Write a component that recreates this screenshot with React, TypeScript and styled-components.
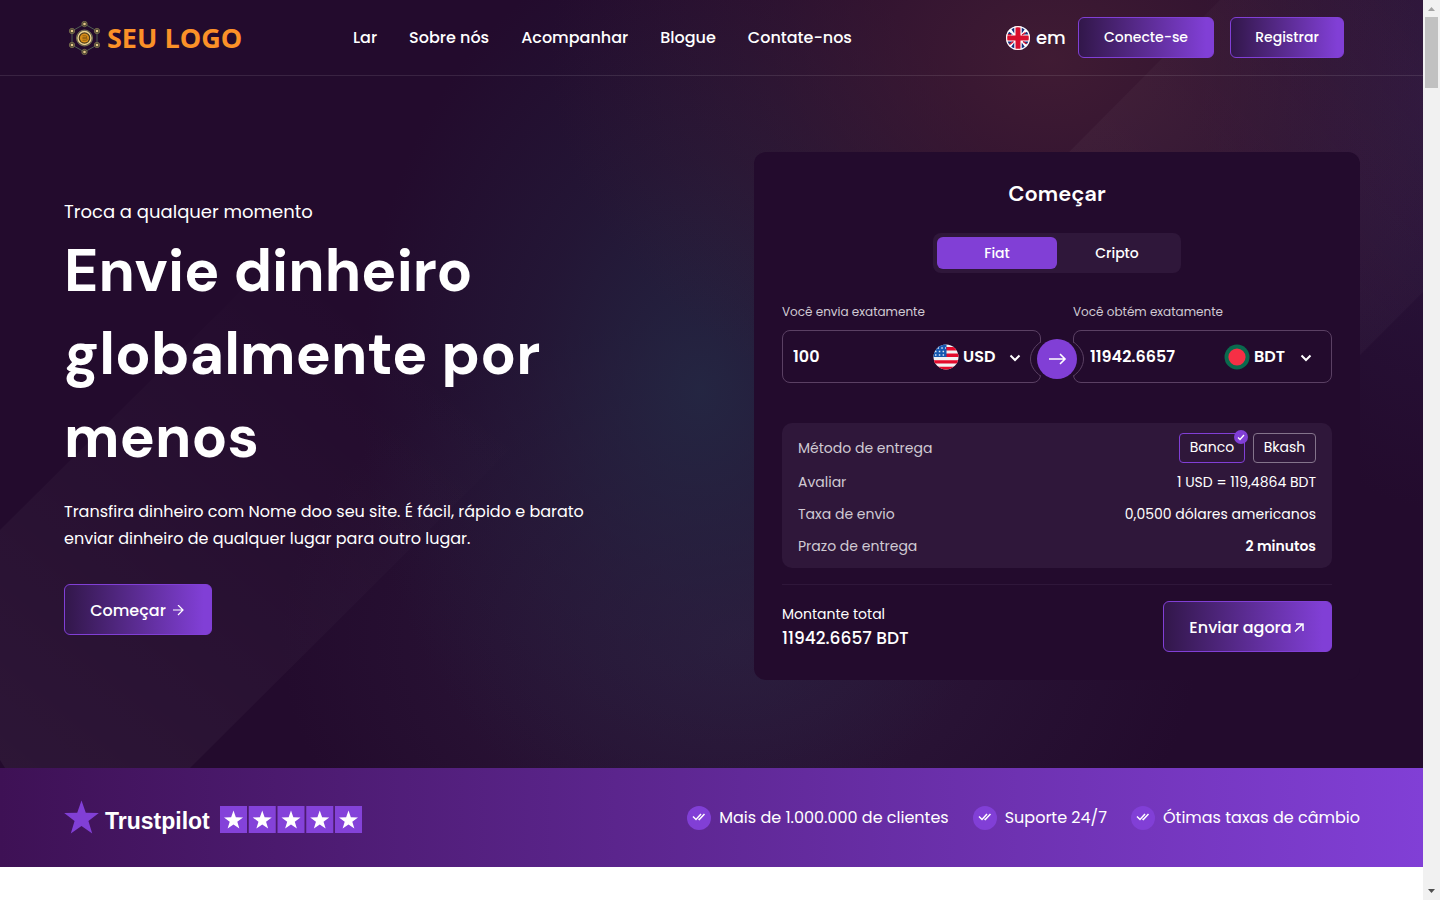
import React from "react";
import styled, { createGlobalStyle, css } from "styled-components";

const color = {
  base: "#230b2d",
  panel: "#2f173a",
  violet: "#813fd6",
  line: "#5a4063",
  muted: "#d0cad3",
};

const GlobalStyle = createGlobalStyle`
  *, *::before, *::after { box-sizing: border-box; }
  body { margin: 0; background: #fff; color: #fff; font-family: Poppins, Inter, "Liberation Sans", sans-serif; font-size: 16px; }
  h1, h2, p, ul, dl, dd, dt { margin: 0; padding: 0; }
  button, input, select { font: inherit; color: inherit; }
  a { color: inherit; text-decoration: none; }
`;

const Shell = styled.div`
  display: flex;
  min-height: 100vh;
  align-items: flex-start;
`;
const Page = styled.div`
  flex: 1;
  min-width: 0;
`;

const ScrollTrack = styled.div`
  position: sticky;
  top: 0;
  display: flex;
  flex-direction: column;
  align-items: center;
  width: 17px;
  height: 100vh;
  background: #f1f1f1;
`;
const ScrollThumb = styled.div`
  width: 13px;
  height: 71px;
  background: #c1c1c1;
`;
const ScrollArrow = styled.svg`
  width: 17px;
  height: 17px;
`;
const Spacer = styled.div`
  flex: 1;
`;

const Top = styled.div`
  position: relative;
  isolation: isolate;
  overflow: hidden;
  background:
    radial-gradient(ellipse 500px 380px at 1050px 60px, rgba(76, 34, 54, 0.7), rgba(76, 34, 54, 0.25) 55%, rgba(76, 34, 54, 0) 100%),
    radial-gradient(ellipse 340px 460px at 700px 390px, rgba(36, 40, 68, 0.9), rgba(36, 38, 66, 0.4) 50%, rgba(36, 36, 64, 0) 100%),
    radial-gradient(ellipse 460px 330px at 740px 640px, rgba(50, 32, 66, 0.7), rgba(50, 32, 66, 0) 100%),
    radial-gradient(ellipse 240px 420px at 1440px 90px, rgba(44, 24, 66, 0.8), rgba(44, 24, 66, 0) 100%),
    ${color.base};
`;
const Backdrop = styled.svg`
  position: absolute;
  inset: 0;
  width: 100%;
  height: 100%;
  z-index: -1;
`;

const Header = styled.header`
  display: flex;
  align-items: center;
  height: 76px;
  padding: 0 79px 0 64px;
  border-bottom: 1px solid rgba(255, 255, 255, 0.1);
`;
const LogoLink = styled.a`
  display: flex;
  align-items: center;
  gap: 6px;
  width: 289px;
  padding-left: 4px;
  color: #fb9128;
  font-family: "Open Sans", "Noto Sans", sans-serif;
  font-weight: 700;
  font-size: 27px;
  line-height: 38px;
`;
const LogoMark = styled.svg`
  width: 33px;
  height: 34px;
`;
const Nav = styled.nav`
  display: flex;
  flex: 1;
  gap: 32px;
  font-size: 16px;
  font-weight: 500;
  line-height: 24px;
`;
const NavLink = styled.a`
  white-space: nowrap;
`;
const LangButton = styled.button`
  display: flex;
  align-items: center;
  gap: 6px;
  width: 72px;
  padding: 0;
  border: 0;
  background: none;
  font-size: 18px;
  font-weight: 500;
  white-space: nowrap;
`;
const FlagIcon = styled.svg<{ $size: number }>`
  width: ${(p) => p.$size}px;
  height: ${(p) => p.$size}px;
  flex: none;
`;
const gradientFace = css`
  display: inline-flex;
  align-items: center;
  justify-content: center;
  border: 1px solid ${color.violet};
  border-radius: 6px;
  background: linear-gradient(90deg, #32174a, #813fd6 95%);
  white-space: nowrap;
`;
const Actions = styled.div`
  display: flex;
  gap: 16px;
`;
const SmallAction = styled.a<{ $w: number }>`
  ${gradientFace}
  width: ${(p) => p.$w}px;
  height: 41px;
  font-size: 14px;
  font-weight: 500;
`;
const LargeAction = styled.button<{ $w: number; $gap: number }>`
  ${gradientFace}
  width: ${(p) => p.$w}px;
  height: 51px;
  padding: 2px 2px 0 0;
  gap: ${(p) => p.$gap}px;
  font-size: 16px;
  font-weight: 500;
`;

const Hero = styled.section`
  display: grid;
  grid-template-columns: minmax(0, 1fr) 606px;
  gap: 84px;
  align-items: center;
  padding: 76px 63px 88px 64px;
`;
const Intro = styled.div`
  display: flex;
  flex-direction: column;
  align-items: flex-start;
  padding-top: 1px;
`;
const Eyebrow = styled.p`
  font-size: 18px;
  line-height: 28px;
`;
const Headline = styled.h1`
  max-width: 520px;
  margin-top: 3px;
  font-family: "DM Sans", Inter, "Liberation Sans", sans-serif;
  font-size: 59px;
  font-weight: 700;
  line-height: 83px;
`;
const Lead = styled.p`
  max-width: 560px;
  margin: 20px 0 32px;
  font-size: 16px;
  line-height: 27px;
`;

const Card = styled.form`
  padding: 28px;
  border-radius: 12px;
  background: ${color.base};
`;
const CardTitle = styled.h2`
  text-align: center;
  font-family: "DM Sans", Inter, "Liberation Sans", sans-serif;
  font-size: 22px;
  font-weight: 600;
  line-height: 28px;
`;
const Tabs = styled.div`
  display: flex;
  width: 248px;
  margin: 25px auto 28px;
  padding: 4px;
  border-radius: 8px;
  background: ${color.panel};
`;
const Tab = styled.button<{ $active?: boolean }>`
  flex: 1;
  height: 32px;
  padding: 0;
  border: 0;
  border-radius: 6px;
  background: ${(p) => (p.$active ? color.violet : "transparent")};
  font-size: 14px;
  font-weight: 500;
`;

const Exchange = styled.div`
  position: relative;
  display: grid;
  grid-template-columns: repeat(2, minmax(0, 1fr));
  gap: 32px;
  margin-bottom: 40px;
`;
const FieldLabel = styled.label`
  display: block;
  margin-bottom: 8px;
  color: ${color.muted};
  font-size: 12px;
  line-height: 21px;
`;
const AmountBox = styled.div<{ $pad: number }>`
  display: flex;
  align-items: center;
  height: 53px;
  padding: 0 18px 0 ${(p) => p.$pad}px;
  border: 1px solid ${color.line};
  border-radius: 8px;
  font-weight: 600;
`;
const AmountInput = styled.input`
  flex: 1;
  min-width: 0;
  padding: 0;
  border: 0;
  outline: 0;
  background: none;
`;
const SelectWrap = styled.div`
  display: flex;
  align-items: center;
  width: 59px;
  margin-left: 4px;
`;
const CurrencySelect = styled.select`
  flex: 1;
  min-width: 0;
  padding: 0;
  border: 0;
  appearance: none;
  background: ${color.base};
`;
const Chevron = styled.svg`
  width: 14px;
  height: 14px;
  flex: none;
`;
const SwapMark = styled.svg`
  position: absolute;
  left: calc(50% - 28px);
  top: 30px;
  width: 56px;
  height: 56px;
`;

const Details = styled.dl`
  display: grid;
  gap: 7px;
  padding: 10px 16px 9px;
  border-radius: 10px;
  background: ${color.panel};
  font-size: 14px;
`;
const DetailRow = styled.div`
  display: flex;
  justify-content: space-between;
  align-items: center;
  min-height: 25px;
`;
const Term = styled.dt`
  color: ${color.muted};
`;
const Value = styled.dd<{ $strong?: boolean }>`
  display: flex;
  gap: 8px;
  font-weight: ${(p) => (p.$strong ? 600 : 400)};
`;
const Chip = styled.label<{ $w: number; $active?: boolean }>`
  position: relative;
  display: flex;
  align-items: center;
  justify-content: center;
  width: ${(p) => p.$w}px;
  height: 30px;
  padding-bottom: 1px;
  border: 1px solid ${(p) => (p.$active ? color.violet : "#84748b")};
  border-radius: 4px;
`;
const ChipRadio = styled.input`
  position: absolute;
  inset: 0;
  margin: 0;
  opacity: 0;
`;
const ChipBadge = styled.svg`
  position: absolute;
  top: -4px;
  right: -4px;
  width: 14px;
  height: 14px;
`;

const Summary = styled.div`
  display: flex;
  justify-content: space-between;
  align-items: center;
  margin-top: 16px;
  padding-top: 16px;
  border-top: 1px solid #2f173a;
`;
const TotalLabel = styled.p`
  font-size: 14px;
  line-height: 22px;
`;
const Total = styled.p`
  font-size: 17px;
  font-weight: 500;
  line-height: 26px;
`;

const TrustBar = styled.section`
  display: flex;
  align-items: center;
  justify-content: space-between;
  height: 99px;
  padding: 0 63px 0 64px;
  background: linear-gradient(90deg, #3e1155, #813fd6);
`;
const Trustpilot = styled.div`
  display: flex;
  align-items: center;
  font-family: "Liberation Sans", Arial, sans-serif;
  font-size: 23px;
  font-weight: 700;
`;
const TrustName = styled.span`
  margin-top: 8px;
`;
const BigStar = styled.svg`
  width: 35px;
  height: 34px;
  margin: 0 6px 2px 0;
`;
const StarStrip = styled.svg`
  width: 142px;
  height: 27px;
  margin: 4px 0 0 10px;
`;
const Perks = styled.ul`
  display: flex;
  gap: 24px;
  list-style: none;
`;
const Perk = styled.li`
  display: flex;
  align-items: center;
  gap: 8px;
  font-size: 16px;
  white-space: nowrap;
`;
const PerkIcon = styled.svg`
  width: 24px;
  height: 24px;
`;

const STAR = "M0 -10 L2.35 -3.24 L9.51 -3.09 L3.8 1.24 L5.88 8.09 L0 4 L-5.88 8.09 L-3.8 1.24 L-9.51 -3.09 L-2.35 -3.24 Z";

const nodes = [
  [16.5, 3],
  [29, 10],
  [29, 24],
  [16.5, 31],
  [4, 24],
  [4, 10],
];

function Logo() {
  return (
    <LogoMark viewBox="0 0 33 34" fill="none" aria-hidden="true">
      <path d="M16.5 3 29 10V24L16.5 31 4 24V10Z" stroke="#4d5a52" />
      {nodes.map(([x, y]) => (
        <g key={`${x}-${y}`}>
          <circle cx={x} cy={y} r="2.7" fill="#4a4230" stroke="#7d7350" strokeWidth="0.8" />
          <circle cx={x} cy={y} r="1.3" fill="#e6c98a" />
        </g>
      ))}
      <circle cx="16.5" cy="17" r="8" fill="#3b3b3c" stroke="#7c7555" />
      <circle cx="16.5" cy="17" r="6.5" fill="#4b3a1c" stroke="#f0d690" strokeWidth="1.4" />
      <circle cx="16.5" cy="17" r="4.6" fill="#d88d18" />
      <path d="M14.5 14.8h3.2a1.1 1.1 0 0 1 0 2.2h-3.2M14.5 17h3.6a1.1 1.1 0 0 1 0 2.2h-3.6" stroke="#7a5312" strokeWidth="0.8" />
    </LogoMark>
  );
}

function UkFlag() {
  return (
    <FlagIcon $size={24} viewBox="0 0 24 24" aria-hidden="true">
      <clipPath id="uk"><circle cx="12" cy="12" r="12" /></clipPath>
      <g clipPath="url(#uk)">
        <path fill="#fff" d="M0 0h24v24H0z" />
        <path fill="#14307e" d="M4.5 2 8.3 0v7.5zM15.7 0l4 2-4 5.5zM2 5l5 3.5H1zM22 5l1 3.5h-6zM1 15.5h6L2 19zM17 15.5h6L22 19zM8.3 16.5V24l-4-2zM15.7 16.5 19.7 22l-4 2z" />
        <path stroke="#d80f2d" strokeWidth="1.3" d="M1 8.6h4M19.5 6.5l-3.5 2.5M3 19l4.500-3.500M17 15.5l3.500 2.500" />
        <path fill="#d80f2d" d="M9.5 0h5v9.5H24v5h-9.5V24h-5v-9.5H0v-5h9.5z" />
      </g>
      <circle cx="12" cy="12" r="11.4" fill="none" stroke="#fff" strokeWidth="1.2" />
    </FlagIcon>
  );
}

function UsFlag() {
  return (
    <FlagIcon $size={26} viewBox="0 0 26 26" aria-hidden="true">
      <clipPath id="us"><circle cx="13" cy="13" r="12.5" /></clipPath>
      <g clipPath="url(#us)">
        <path fill="#f2f2f2" d="M0 0h26v26H0z" />
        <path fill="#e30b2c" d="M13 3h13v3.4H13zM13 9.6h13V13H13zM0 16.2h26v3.3H0zM0 22.7h26V26H0z" />
        <path fill="#1558b0" d="M0 0h13.5v13H0z" />
        <path stroke="#dbe6f4" strokeWidth="1.5" strokeDasharray="1.5 2.3" d="M4.5 4H13M2 7.5h11M2 11h11" />
      </g>
    </FlagIcon>
  );
}

function BdFlag() {
  return (
    <FlagIcon $size={26} viewBox="0 0 26 26" aria-hidden="true">
      <circle cx="13" cy="13" r="12.5" fill="#0a6a4e" />
      <circle cx="13" cy="13" r="8.6" fill="#f62f45" />
    </FlagIcon>
  );
}

function Currency({ code, label }: { code: string; label: string }) {
  return (
    <SelectWrap>
      <CurrencySelect aria-label={label} defaultValue={code}>
        <option>{code}</option>
      </CurrencySelect>
      <Chevron viewBox="0 0 14 14" fill="none" stroke="#fff" strokeWidth="2" aria-hidden="true">
        <path d="M2.5 5.5 7 10l4.500-4.500" />
      </Chevron>
    </SelectWrap>
  );
}

const links = ["Lar", "Sobre nós", "Acompanhar", "Blogue", "Contate-nos"];
const perks = ["Mais de 1.000.000 de clientes", "Suporte 24/7", "Ótimas taxas de câmbio"];

export default function App() {
  return (
    <>
      <GlobalStyle />
      <Shell>
        <Page>
          <Top>
            <Backdrop viewBox="0 0 1423 768" preserveAspectRatio="none" aria-hidden="true">
              <defs>
                <linearGradient id="leftBand" x1="0" y1="1" x2="1" y2="0">
                  <stop offset="0" stopColor="#fff" stopOpacity="0.045" />
                  <stop offset="0.75" stopColor="#fff" stopOpacity="0" />
                </linearGradient>
                <linearGradient id="rightBand" x1="1" y1="0" x2="0" y2="1">
                  <stop offset="0" stopColor="#fff" stopOpacity="0.01" />
                  <stop offset="0.5" stopColor="#fff" stopOpacity="0.03" />
                  <stop offset="1" stopColor="#fff" stopOpacity="0" />
                </linearGradient>
              </defs>
              <path d="M0 530 270 262 640 320 190 768H5L0 760Z" fill="url(#leftBand)" />
              <path d="M1220 0H1423V292L1180 535 960 262Z" fill="url(#rightBand)" />
            </Backdrop>
            <Header>
              <LogoLink href="#">
                <Logo />
                SEU LOGO
              </LogoLink>
              <Nav>
                {links.map((text) => (
                  <NavLink key={text} href="#">{text}</NavLink>
                ))}
              </Nav>
              <LangButton type="button">
                <UkFlag />
                em
              </LangButton>
              <Actions>
                <SmallAction href="#" $w={136}>Conecte-se</SmallAction>
                <SmallAction href="#" $w={114}>Registrar</SmallAction>
              </Actions>
            </Header>
            <Hero>
              <Intro>
                <Eyebrow>Troca a qualquer momento</Eyebrow>
                <Headline>Envie dinheiro globalmente por menos</Headline>
                <Lead>
                  Transfira dinheiro com Nome doo seu site. É fácil, rápido e barato enviar dinheiro de qualquer lugar para
                  outro lugar.
                </Lead>
                <LargeAction type="button" $w={148} $gap={6}>
                  Começar
                  <svg width="12" height="12" viewBox="0 0 12 12" fill="none" stroke="#fff" strokeWidth="1.2" aria-hidden="true">
                    <path d="M1 5h10M6 0l5 5-5 5" />
                  </svg>
                </LargeAction>
              </Intro>
              <Card onSubmit={(e) => e.preventDefault()}>
                <CardTitle>Começar</CardTitle>
                <Tabs role="tablist">
                  <Tab type="button" role="tab" aria-selected="true" $active>Fiat</Tab>
                  <Tab type="button" role="tab" aria-selected="false">Cripto</Tab>
                </Tabs>
                <Exchange>
                  <div>
                    <FieldLabel htmlFor="send">Você envia exatamente</FieldLabel>
                    <AmountBox $pad={10}>
                      <AmountInput id="send" defaultValue="100" />
                      <UsFlag />
                      <Currency code="USD" label="Moeda de envio" />
                    </AmountBox>
                  </div>
                  <div>
                    <FieldLabel htmlFor="receive">Você obtém exatamente</FieldLabel>
                    <AmountBox $pad={16}>
                      <AmountInput id="receive" defaultValue="11942.6657" />
                      <BdFlag />
                      <Currency code="BDT" label="Moeda de recebimento" />
                    </AmountBox>
                  </div>
                  <SwapMark viewBox="0 0 56 56" fill="none" aria-hidden="true">
                    <path
                      d="M12.5 11C7 14.5 1.5 20 1.5 28S7 41.5 12.5 45H43.5C49 41.5 54.5 36 54.5 28S49 14.5 43.5 11Z"
                      fill={color.base}
                    />
                    <path
                      d="M11.5 11C7 14.5 1.5 20 1.5 28S7 41.5 11.5 45M44.5 11C49 14.5 54.5 20 54.5 28S49 41.5 44.5 45"
                      stroke={color.line}
                    />
                    <circle cx="28" cy="28" r="20" fill={color.violet} />
                    <path d="M20 28h16M31 23l5 5-5 5" stroke="#fff" strokeWidth="1.6" />
                  </SwapMark>
                </Exchange>
                <Details>
                  <DetailRow>
                    <Term>Método de entrega</Term>
                    <Value>
                      <Chip $w={66} $active>
                        <ChipRadio type="radio" name="method" defaultChecked />
                        Banco
                        <ChipBadge viewBox="0 0 14 14" fill="none" aria-hidden="true">
                          <circle cx="7" cy="7" r="7" fill={color.violet} />
                          <path d="M4 7.5l2 2L10 5" stroke="#fff" strokeWidth="1.3" />
                        </ChipBadge>
                      </Chip>
                      <Chip $w={63}>
                        <ChipRadio type="radio" name="method" />
                        Bkash
                      </Chip>
                    </Value>
                  </DetailRow>
                  <DetailRow>
                    <Term>Avaliar</Term>
                    <Value>1 USD = 119,4864 BDT</Value>
                  </DetailRow>
                  <DetailRow>
                    <Term>Taxa de envio</Term>
                    <Value>0,0500 dólares americanos</Value>
                  </DetailRow>
                  <DetailRow>
                    <Term>Prazo de entrega</Term>
                    <Value $strong>2 minutos</Value>
                  </DetailRow>
                </Details>
                <Summary>
                  <div>
                    <TotalLabel>Montante total</TotalLabel>
                    <Total>11942.6657 BDT</Total>
                  </div>
                  <LargeAction type="submit" $w={169} $gap={2}>
                    Enviar agora
                    <svg width="10" height="10" viewBox="0 0 10 10" fill="none" stroke="#fff" strokeWidth="1.5" aria-hidden="true">
                      <path d="M1 8.5 8.5 1M2 1h7v7" />
                    </svg>
                  </LargeAction>
                </Summary>
              </Card>
            </Hero>
          </Top>
          <TrustBar>
            <Trustpilot>
              <BigStar viewBox="-9.6 -10 19.2 18.2" fill={color.violet} aria-hidden="true">
                <path d={STAR} />
              </BigStar>
              <TrustName>Trustpilot</TrustName>
              <StarStrip viewBox="0 0 142 27" aria-hidden="true">
                {[0, 1, 2, 3, 4].map((i) => (
                  <g key={i} transform={`translate(${i * 28.75} 0)`}>
                    <path fill="#8442d9" d="M0 0h27v27H0z" />
                    <path fill="#fff" d={STAR} transform="translate(13.5 14.5)" />
                  </g>
                ))}
              </StarStrip>
            </Trustpilot>
            <Perks>
              {perks.map((text) => (
                <Perk key={text}>
                  <PerkIcon viewBox="0 0 24 24" fill="none" stroke="#fff" strokeWidth="1.5" aria-hidden="true">
                    <circle cx="12" cy="12" r="12" fill={color.violet} stroke="none" />
                    <path d="M6 10.5l3 3L14 8M11.5 13l.8.5L17.5 8" />
                  </PerkIcon>
                  {text}
                </Perk>
              ))}
            </Perks>
          </TrustBar>
        </Page>
        <ScrollTrack aria-hidden="true">
          <ScrollArrow viewBox="0 0 17 17" fill="#a3a3a3"><path d="M5 11l3.500-4L12 11z" /></ScrollArrow>
          <ScrollThumb />
          <Spacer />
          <ScrollArrow viewBox="0 0 17 17" fill="#505050"><path d="M5 6l3.500 4L12 6z" /></ScrollArrow>
        </ScrollTrack>
      </Shell>
    </>
  );
}
